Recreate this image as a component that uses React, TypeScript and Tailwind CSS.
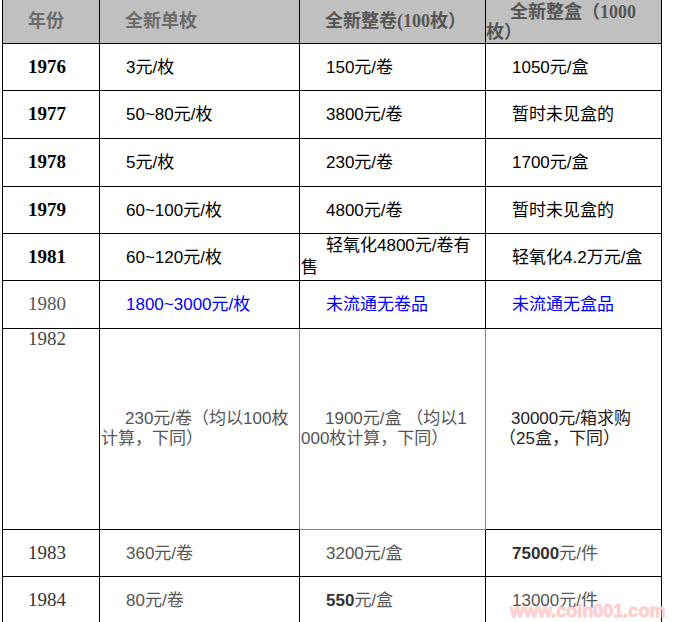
import React from 'react';

// 表格：1976–1984 年 硬币价格
const SANS = "font-['Liberation_Sans','Noto_Sans_CJK_SC',sans-serif]";
const SERIF = "font-['Liberation_Serif','Noto_Sans_CJK_SC',serif]";

const td = 'border-r border-b border-black py-0 pr-0 align-middle text-left';
const yearTd = `${td} ${SERIF} text-[19px] pl-[25px]`;
const valTd = `${td} ${SANS} text-[17px] leading-[21px] pl-[26px] whitespace-nowrap`;

export default function App() {
  return (
    <div className="relative w-[677px] h-[622px] overflow-hidden bg-white">
      <table className="ml-[2px] mt-[-1px] w-[659px] table-fixed border-separate border-spacing-0 border-l border-t border-black">
        <colgroup>
          <col className="w-[97px]" />
          <col className="w-[200px]" />
          <col className="w-[186px]" />
          <col className="w-[176px]" />
        </colgroup>
        <thead>
          <tr className="h-[44px]">
            {['年份', '全新单枚'].map((t) => (
              <th key={t} className={`${td} bg-[#c0c0c0] text-[#6a6a6a] font-bold text-[18px] pl-[25px] ${SANS}`}>
                {t}
              </th>
            ))}
            <th className={`${td} bg-[#c0c0c0] text-[#555] font-bold text-[18px] pl-[25px] whitespace-nowrap ${SERIF}`}>
              全新整卷(100枚）
            </th>
            <th className={`${td} bg-[#c0c0c0] text-[#555] font-bold text-[18px] leading-[20px] pl-0 ${SERIF}`}>
              <div className="pl-[24px] whitespace-nowrap">全新整盒（1000</div>
              <div>枚）</div>
            </th>
          </tr>
        </thead>
        <tbody className="text-black">
          {[
            { y: '1976', h: 'h-[47px]', a: '3元/枚', b: '150元/卷', c: '1050元/盒' },
            { y: '1977', h: 'h-[48px]', a: '50~80元/枚', b: '3800元/卷', c: '暂时未见盒的' },
            { y: '1978', h: 'h-[48px]', a: '5元/枚', b: '230元/卷', c: '1700元/盒' },
            { y: '1979', h: 'h-[47px]', a: '60~100元/枚', b: '4800元/卷', c: '暂时未见盒的' },
          ].map((r) => (
            <tr key={r.y} className={r.h}>
              <td className={`${yearTd} font-bold`}>{r.y}</td>
              <td className={valTd}>{r.a}</td>
              <td className={valTd}>{r.b}</td>
              <td className={valTd}>{r.c}</td>
            </tr>
          ))}
          <tr className="h-[47px]">
            <td className={`${yearTd} font-bold`}>1981</td>
            <td className={valTd}>60~120元/枚</td>
            <td className={`${td} pl-px ${SANS} text-[17px] leading-[22px] whitespace-nowrap`}>
              <div className="pl-[25px]">轻氧化4800元/卷有</div>
              <div>售</div>
            </td>
            <td className={valTd}>轻氧化4.2万元/盒</td>
          </tr>
          <tr className="h-[48px] text-[#0000ff]">
            <td className={`${yearTd} text-[#555]`}>1980</td>
            <td className={valTd}>1800~3000元/枚</td>
            <td className={valTd}>未流通无卷品</td>
            <td className={valTd}>未流通无盒品</td>
          </tr>
          <tr className="h-[201px]">
            <td className={`${td} ${SERIF} text-[19px] pl-[25px] align-top leading-[20px] text-[#444]`}>1982</td>
            <td className={`${td} pl-px border-r-[#5f8ac8]! ${SANS} text-[17px] leading-[20px] text-[#555] whitespace-nowrap`}>
              <div className="pl-[24px]">230元/卷（均以100枚</div>
              <div>计算，下同）</div>
            </td>
            <td className={`${td} pl-px border-r-[#5f8ac8]! border-b-[#5f8ac8]! ${SANS} text-[17px] leading-[20px] text-[#555] whitespace-nowrap`}>
              <div className="pl-[24px]">1900元/盒 （均以1</div>
              <div>000枚计算，下同）</div>
            </td>
            <td className={`${td} pl-px ${SANS} text-[17px] leading-[20px] text-[#222] whitespace-nowrap`}>
              <div className="pl-[24px]">30000元/箱求购</div>
              <div className="pl-[12px]">（25盒，下同）</div>
            </td>
          </tr>
          <tr className="h-[47px] text-[#555]">
            <td className={`${yearTd} text-[#333]`}>1983</td>
            <td className={valTd}>360元/卷</td>
            <td className={valTd}>3200元/盒</td>
            <td className={valTd}>
              <span className="font-bold text-[#333]">75000</span>元/件
            </td>
          </tr>
          <tr className="h-[47px] text-[#555]">
            <td className={`${yearTd} text-[#333]`}>1984</td>
            <td className={valTd}>80元/卷</td>
            <td className={valTd}>
              <span className="font-bold text-[#333]">550</span>元/盒
            </td>
            <td className={valTd}>13000元/件</td>
          </tr>
        </tbody>
      </table>

      {/* 水印 */}
      <div className="absolute left-[510px] top-[602px] text-[18px] leading-[18px] font-black text-[#fdcfcf] [-webkit-text-stroke:0.8px_#fdcfcf] font-['Liberation_Sans',sans-serif] pointer-events-none whitespace-nowrap">
        www.coin001.com
      </div>
    </div>
  );
}
